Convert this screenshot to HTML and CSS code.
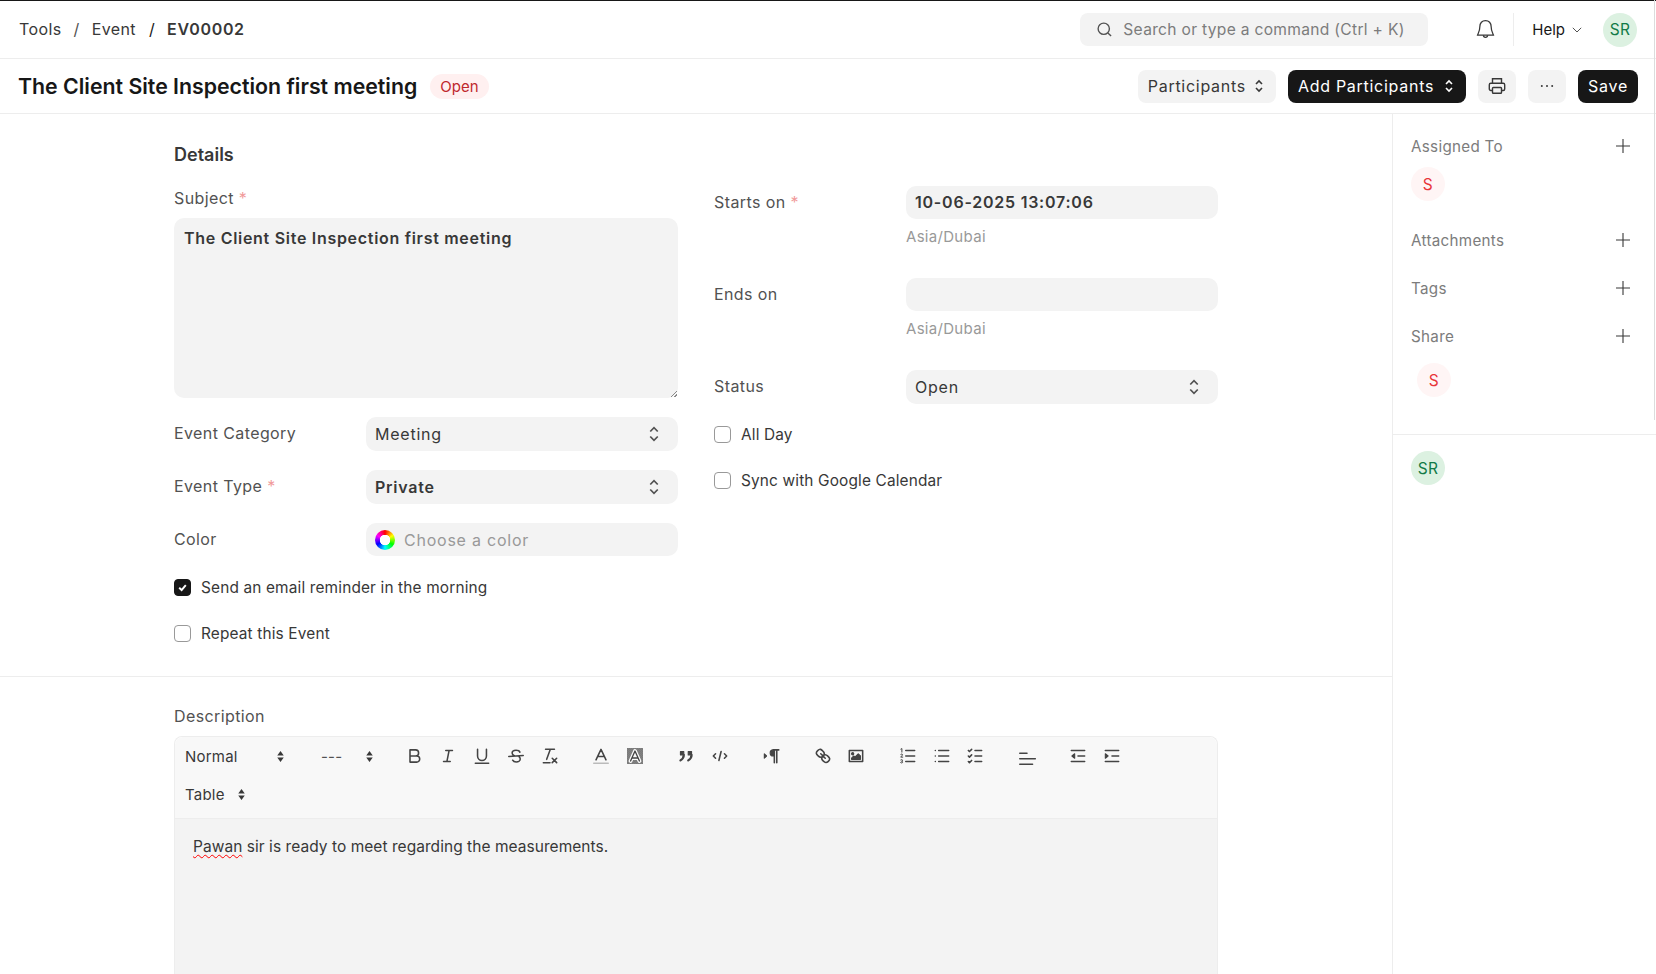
FILE: index.html
```html
<!DOCTYPE html>
<html lang="en">
<head>
    <meta charset="UTF-8">
    <meta name="viewport" content="width=device-width, initial-scale=1.0">
    <title>The Client Site Inspection first meeting</title>
    <link rel="stylesheet" href="styles.css">
</head>
<body>
    <header class="navbar">
        <nav class="crumbs">
            <a>Tools</a><span class="sep">/</span>
            <a>Event</a><span class="sep sep-dark">/</span>
            <a class="crumb-current">EV00002</a>
        </nav>
        <div class="search">
            <svg class="search-icon" viewBox="0 0 16 16"><circle cx="7.3" cy="7.3" r="5.3"/><path d="M11.2 11.2 14.2 14.2"/></svg>
            <span>Search or type a command (Ctrl + K)</span>
        </div>
        <svg class="bell" viewBox="0 0 20 20"><path d="M10 2.2c-3 0-4.9 2.2-4.9 5.2 0 4.400-1.700 6.400-2 7.400h13.800c-.3-1-2-3-2-7.400 0-3-1.900-5.200-4.900-5.200z"/><path d="M8.200 15c0 2.400 3.600 2.400 3.600 0"/></svg>
        <span class="nav-divider"></span>
        <span class="help">Help
            <svg viewBox="0 0 10 6"><path d="M.8.8 5 5 9.200.8"/></svg>
        </span>
        <span class="avatar avatar-green nav-avatar">SR</span>
    </header>

    <div class="page-head">
        <h1>The Client Site Inspection first meeting</h1>
        <span class="badge">Open</span>
        <div class="actions">
            <button class="btn">Participants <svg class="updown" viewBox="0 0 8 14"><path d="M1 5 4 2l3 3M1 9l3 3 3-3"/></svg></button>
            <button class="btn btn-dark btn-wide">Add Participants <svg class="updown" viewBox="0 0 8 14"><path d="M1 5 4 2l3 3M1 9l3 3 3-3"/></svg></button>
            <button class="btn btn-icon"><svg viewBox="0 0 20 20"><path d="M5.500 7V2.800h9V7M5.500 14.500H3.800a1.500 1.500 0 0 1-1.500-1.500V8.700a1.500 1.500 0 0 1 1.500-1.500h12.400a1.500 1.500 0 0 1 1.500 1.500V13a1.500 1.500 0 0 1-1.500 1.500h-1.700"/><rect x="5.500" y="11.500" width="9" height="5.700" rx=".8"/></svg></button>
            <button class="btn btn-icon"><svg viewBox="0 0 20 20"><circle class="dot" cx="4.800" cy="10" r="1"/><circle class="dot" cx="10" cy="10" r="1"/><circle class="dot" cx="15.200" cy="10" r="1"/></svg></button>
            <button class="btn btn-dark btn-save">Save</button>
        </div>
    </div>

    <div class="layout">
        <main class="main">
            <section class="details">
                <h2>Details</h2>
                <div class="columns">
                    <div class="col col-left">
                        <label class="stack-label">Subject <i class="req">*</i></label>
                        <div class="textarea">The Client Site Inspection first meeting<span class="grip"></span></div>

                        <div class="row row-first">
                            <label>Event Category</label>
                            <div class="input select">Meeting <svg class="updown" viewBox="0 0 8 14"><path d="M1 5 4 2l3 3M1 9l3 3 3-3"/></svg></div>
                        </div>
                        <div class="row">
                            <label>Event Type <i class="req">*</i></label>
                            <div class="input select strong">Private <svg class="updown" viewBox="0 0 8 14"><path d="M1 5 4 2l3 3M1 9l3 3 3-3"/></svg></div>
                        </div>
                        <div class="row">
                            <label>Color</label>
                            <div class="input color-input"><span class="wheel"></span>Choose a color</div>
                        </div>

                        <div class="check check-first"><span class="box box-on"><svg viewBox="0 0 10 10"><path d="M2 5.300 4.200 7.300 8 2.900"/></svg></span>Send an email reminder in the morning</div>
                        <div class="check"><span class="box"></span>Repeat this Event</div>
                    </div>

                    <div class="col col-right">
                        <div class="row row-tz">
                            <label>Starts on <i class="req">*</i></label>
                            <div>
                                <div class="input strong">10-06-2025 13:07:06</div>
                                <p class="hint">Asia/Dubai</p>
                            </div>
                        </div>
                        <div class="row row-tz">
                            <label>Ends on</label>
                            <div>
                                <div class="input"></div>
                                <p class="hint">Asia/Dubai</p>
                            </div>
                        </div>
                        <div class="row">
                            <label>Status</label>
                            <div class="input select">Open <svg class="updown" viewBox="0 0 8 14"><path d="M1 5 4 2l3 3M1 9l3 3 3-3"/></svg></div>
                        </div>
                        <div class="check check-allday"><span class="box"></span>All Day</div>
                        <div class="check"><span class="box"></span>Sync with Google Calendar</div>
                    </div>
                </div>
            </section>

            <section class="description">
                <label class="stack-label">Description</label>
                <div class="editor">
                    <div class="toolbar">
                        <div class="tool-row">
                            <span class="picker picker-normal">Normal <svg class="caret" viewBox="0 0 8 12"><path d="M4 1 7 5H1zM4 11 1 7h6z"/></svg></span>
                            <span class="picker picker-size">--- <svg class="caret" viewBox="0 0 8 12"><path d="M4 1 7 5H1zM4 11 1 7h6z"/></svg></span>
                            <div class="group">
                                <span class="tool"><svg viewBox="0 0 18 18"><path d="M4.500 3.500h5a2.700 2.700 0 0 1 0 5.500h-5zM4.500 9h6a2.700 2.700 0 0 1 0 5.500h-6z"/></svg></span>
                                <span class="tool"><svg viewBox="0 0 18 18"><path d="M7 4h6M5 14h6M8 14l2-10"/></svg></span>
                                <span class="tool"><svg viewBox="0 0 18 18"><path d="M5 3v6a4 4 0 0 0 8 0V3M3 15.500h12"/></svg></span>
                                <span class="tool"><svg viewBox="0 0 18 18"><path d="M2.500 9.500l13-1M12.500 5.500C12 4.200 10.800 3.800 9 3.800c-2 0-3.500 1-3.500 2.600 0 1.100.7 1.900 2 2.300M6 12.800C6.600 14 7.800 14.400 9.200 14.400c2.100 0 3.600-1 3.600-2.700 0-.8-.3-1.400-.9-1.900"/></svg></span>
                                <span class="tool"><svg viewBox="0 0 18 18"><path d="M5 3h8M6 12l3.300-9M11 11l4 4M15 11l-4 4M3 15h6"/></svg></span>
                            </div>
                            <div class="group">
                                <span class="tool"><svg viewBox="0 0 18 18"><path class="faint" d="M2.500 15.500h13"/><path d="M4.500 12.500 9 3l4.500 9.500M6.200 9.500h5.600"/></svg></span>
                                <span class="tool"><svg viewBox="0 0 18 18"><defs><pattern id="dither" width="1.8" height="1.8" patternUnits="userSpaceOnUse"><rect width=".9" height=".9" fill="#444"/><rect x=".9" y=".9" width=".9" height=".9" fill="#444"/></pattern></defs><rect class="dither" x="1.800" y="1.800" width="14.400" height="14.400" fill="url(#dither)"/><path class="halo" d="M5 13.500 9 4.500l4 9M6.400 10.800h5.200"/><path class="a-mark" d="M5 13.500 9 4.500l4 9M6.400 10.800h5.200"/></svg></span>
                            </div>
                            <div class="group">
                                <span class="tool"><svg viewBox="0 0 18 18"><rect class="solid" x="4" y="5" width="3" height="3"/><rect class="solid" x="11" y="5" width="3" height="3"/><path class="bold" d="M7 8c0 3-3 5-3 5M14 8c0 3-3 5-3 5"/></svg></span>
                                <span class="tool"><svg viewBox="0 0 18 18"><path d="M5 7 3 9l2 2M13 7l2 2-2 2M10 5l-2 8"/></svg></span>
                            </div>
                            <div class="group">
                                <span class="tool"><svg viewBox="0 0 18 18"><path class="solid" d="M3 11l2-2-2-2z"/><path class="solid" d="M11 3.500a2.700 2.700 0 0 0 0 5.500h.7V3.500z"/><path d="M11 3.500h5M12 4v11M14.200 4v11"/></svg></span>
                            </div>
                            <div class="group">
                                <span class="tool"><svg viewBox="0 0 18 18"><path d="M7 7l4 4M8.900 4.600a3.500 3.500 0 0 1 .4 4.700 3.500 3.500 0 0 1-4.700-.4C3.200 7.500 2 6.400 4.200 4.200S7.500 3.200 8.900 4.600zM13.400 9.100a3.500 3.500 0 0 0-4.700-.4 3.500 3.500 0 0 0 .4 4.700c1.400 1.400 2.500 2.500 4.700.4s1-3.300-.4-4.700z"/></svg></span>
                                <span class="tool"><svg viewBox="0 0 18 18"><rect x="3" y="4" width="12" height="10"/><circle class="solid" cx="6" cy="7" r="1"/><path class="solid" d="M5 12v-1l2-2 1 1 3-3 2 2v3z"/></svg></span>
                            </div>
                            <div class="group">
                                <span class="tool"><svg viewBox="0 0 18 18"><path d="M7 4h8M7 9h8M7 14h8"/><path class="thin" d="M2.600 2.800l.9-.5v3.200M2.400 7.700c.4-.8 1.800-.6 1.700.3 0 .8-1.500 1.200-1.700 2h1.900M2.500 12.500c.6-.5 1.700-.3 1.600.5 0 .5-.6.700-.9.700.5 0 1 .2 1 .8 0 .8-1.200 1-1.800.5"/></svg></span>
                                <span class="tool"><svg viewBox="0 0 18 18"><path d="M6 4h9M6 9h9M6 14h9"/><path d="M3 4h.01M3 9h.01M3 14h.01"/></svg></span>
                                <span class="tool"><svg viewBox="0 0 18 18"><path d="M9 4h6M9 9h6M9 14h6M3 4l1 1 2-2M3 9l1 1 2-2M3 14l1 1 2-2"/></svg></span>
                            </div>
                            <div class="group">
                                <span class="tool"><svg viewBox="0 0 18 18"><path d="M2.500 6.500h6.500M2.500 11.500h14M2.500 16.500h11.500"/></svg></span>
                            </div>
                            <div class="group">
                                <span class="tool"><svg viewBox="0 0 18 18"><path d="M3 4h12M9 9h6M3 14h12"/><path class="solid" d="M6 11 3.500 9 6 7z"/></svg></span>
                                <span class="tool"><svg viewBox="0 0 18 18"><path d="M3 4h12M9 9h6M3 14h12"/><path class="solid" d="M3 7l2.500 2L3 11z"/></svg></span>
                            </div>
                        </div>
                        <div class="tool-row">
                            <span class="picker picker-table">Table <svg class="caret" viewBox="0 0 8 12"><path d="M4 1 7 5H1zM4 11 1 7h6z"/></svg></span>
                        </div>
                    </div>
                    <div class="editor-body"><span class="misspelt">Pawan</span> sir is ready to meet regarding the measurements.</div>
                </div>
            </section>
        </main>

        <aside class="sidebar">
            <div class="side-top">
                <div class="side-head side-assigned"><span>Assigned To</span><svg class="plus" viewBox="0 0 16 16"><path d="M8 1v14M1 8h14"/></svg></div>
                <span class="avatar avatar-red">S</span>
                <div class="side-head side-attach"><span>Attachments</span><svg class="plus" viewBox="0 0 16 16"><path d="M8 1v14M1 8h14"/></svg></div>
                <div class="side-head"><span>Tags</span><svg class="plus" viewBox="0 0 16 16"><path d="M8 1v14M1 8h14"/></svg></div>
                <div class="side-head"><span>Share</span><svg class="plus" viewBox="0 0 16 16"><path d="M8 1v14M1 8h14"/></svg></div>
                <span class="avatar avatar-red avatar-shared">S</span>
            </div>
            <div class="side-bottom">
                <span class="avatar avatar-green">SR</span>
            </div>
        </aside>
    </div>
    <div class="scroll-edge"></div>
</body>
</html>
```

FILE: styles.css
```css
* {
    box-sizing: border-box;
}

html, body {
    height: 100%;
    overflow: hidden;
}

body {
    margin: 0;
    background: #fff;
    color: #383838;
    font-family: Inter, "Noto Sans", sans-serif;
    font-size: 15px;
    letter-spacing: 0.02em;
    position: relative;
}

/* top bar */
.navbar {
    height: 59px;
    display: flex;
    align-items: center;
    padding: 0 19px;
    border-top: 1px solid #171717;
    border-bottom: 1px solid #ededed;
}

.crumbs {
    font-size: 16px;
    color: #383838;
    letter-spacing: 0.025em;
    flex: 1;
    padding-bottom: 2px;
}

.sep {
    margin: 0 7px 0 12px;
    color: #525252;
}

.sep-dark {
    margin: 0 7px 0 13px;
    color: #171717;
}

.crumb-current {
    font-weight: 600;
    letter-spacing: 0.04em;
}

.search {
    width: 348px;
    height: 33px;
    background: #f3f3f3;
    border-radius: 8px;
    display: flex;
    align-items: center;
    padding-left: 16px;
    color: #7c7c7c;
    font-size: 15.6px;
}

.search-icon {
    width: 17px;
    height: 17px;
    margin-right: 10px;
    fill: none;
    stroke: #525252;
    stroke-width: 1.3;
}

.bell {
    width: 23px;
    height: 23px;
    margin-left: 46px;
    fill: none;
    stroke: #383838;
    stroke-width: 1.1;
}

.nav-divider {
    width: 1px;
    height: 33px;
    background: #ededed;
    margin: 0 18px 0 16px;
}

.help {
    display: flex;
    align-items: center;
    color: #171717;
    font-size: 15px;
    letter-spacing: 0;
}

.help svg {
    width: 10px;
    height: 6px;
    margin-left: 7px;
    fill: none;
    stroke: #525252;
}

.nav-avatar {
    margin-left: 21px;
    font-size: 17px;
}

/* title row */
.page-head {
    height: 55px;
    display: flex;
    align-items: center;
    padding: 0 18px;
    border-bottom: 1px solid #ededed;
}

h1 {
    margin: 0;
    font-size: 21.3px;
    font-weight: 600;
    color: #171717;
    letter-spacing: 0;
}

.badge {
    margin-left: 13px;
    padding: 0 10px;
    height: 25px;
    line-height: 25px;
    border-radius: 13px;
    background: #fff0f0;
    color: #c0282d;
    font-size: 15px;
    letter-spacing: 0;
}

.actions {
    margin-left: auto;
    display: flex;
    gap: 12px;
}

.btn {
    height: 33px;
    padding: 0 13px 0 10px;
    border: 0;
    border-radius: 8px;
    background: #f3f3f3;
    color: #383838;
    font: inherit;
    font-size: 16px;
    letter-spacing: 0.045em;
    display: flex;
    align-items: center;
    gap: 9px;
}

.btn-dark {
    background: #171717;
    color: #fff;
}

.btn-wide {
    gap: 11px;
}

.btn-icon {
    width: 38px;
    padding: 0;
    justify-content: center;
}

.btn-icon svg {
    width: 20px;
    height: 20px;
    fill: none;
    stroke: #383838;
    stroke-width: 1.4;
}

.btn-icon .dot {
    fill: #383838;
    stroke: none;
}

.btn-save {
    padding: 0 10px;
}

.updown {
    width: 8px;
    height: 14px;
    fill: none;
    stroke: currentColor;
    stroke-width: 1.6;
}

/* page body */
.layout {
    display: flex;
    height: calc(100vh - 114px);
}

.main {
    flex: 1;
    min-width: 0;
    border-right: 1px solid #ededed;
}

.details {
    padding: 30px 0 0 174px;
    height: 563px;
    border-bottom: 1px solid #ededed;
}

h2 {
    margin: 0 0 17px;
    font-size: 18px;
    line-height: 22px;
    font-weight: 600;
    letter-spacing: 0;
}

.columns {
    display: flex;
    gap: 36px;
}

.col {
    width: 504px;
}

.col-left {
    padding-top: 5px;
}

.col-right {
    padding-top: 3px;
}

label {
    color: #525252;
    font-size: 16px;
    letter-spacing: 0.025em;
}

.stack-label {
    display: block;
    line-height: 20px;
    margin-bottom: 10px;
}

.req {
    color: #f19a9a;
    font-style: normal;
}

.textarea {
    height: 180px;
    background: #f3f3f3;
    border-radius: 10px;
    padding: 10px;
    font-size: 16px;
    font-weight: 600;
    line-height: 20px;
    letter-spacing: 0.044em;
    position: relative;
}

.grip {
    position: absolute;
    right: 1px;
    bottom: 1px;
    width: 6px;
    height: 6px;
    background: linear-gradient(135deg, transparent 45%, #8a8a8a 45%, #8a8a8a 55%, transparent 55%, transparent 70%, #8a8a8a 70%, #8a8a8a 85%, transparent 85%);
}

.row {
    display: grid;
    grid-template-columns: 192px 312px;
    margin-bottom: 19px;
}

.row label {
    line-height: 32px;
}

.row-first {
    margin-top: 19px;
}

.col-right .row-tz {
    margin-bottom: 26px;
}

.input {
    height: 33px;
    background: #f3f3f3;
    border-radius: 10px;
    padding: 0 9px;
    font-size: 16px;
    line-height: 33px;
    letter-spacing: 0.048em;
    display: flex;
    align-items: center;
}

.strong {
    font-weight: 600;
}

.select {
    height: 34px;
    justify-content: space-between;
    padding-right: 19px;
}

.select .updown {
    width: 10px;
    height: 18px;
    stroke: #525252;
    stroke-width: 1.4;
}

.hint {
    margin: 8px 0 0;
    height: 25px;
    line-height: 20px;
    font-size: 15px;
    color: #999;
    letter-spacing: 0.02em;
}

.color-input {
    color: #999;
    padding-top: 1px;
}

.wheel {
    width: 20px;
    height: 20px;
    margin-right: 9px;
    border-radius: 50%;
    background: radial-gradient(circle, #fff 0 5px, transparent 5.500px), conic-gradient(#f00, #ff0, #0f0, #0ff, #00f, #f0f, #f00);
}

.check {
    display: flex;
    align-items: center;
    height: 20px;
    margin-top: 26px;
    color: #383838;
    font-size: 15.4px;
    letter-spacing: 0.01em;
}

.check-first {
    margin-top: 21px;
}

.check-allday {
    margin-top: 20px;
}

.box {
    width: 17px;
    height: 17px;
    margin-right: 10px;
    border: 1px solid #999;
    border-radius: 4px;
    background: #fff;
    flex: none;
}

.box-on {
    background: #171717;
    border-color: #171717;
    display: flex;
    align-items: center;
    justify-content: center;
}

.box-on svg {
    width: 11px;
    height: 11px;
    fill: none;
    stroke: #fff;
    stroke-width: 1.8;
}

/* description */
.description {
    padding: 29px 0 0 174px;
    width: 1218px;
}

.description .stack-label {
    margin-bottom: 11px;
}

.editor {
    border: 1px solid #ededed;
    border-bottom: 0;
    border-radius: 8px 8px 0 0;
    height: 238px;
    margin-top: -1px;
    overflow: hidden;
}

.toolbar {
    background: #f8f8f8;
    border-bottom: 1px solid #ededed;
    border-radius: 8px 8px 0 0;
    padding: 0 0 3px 5px;
    height: 82px;
}

.tool-row {
    height: 38px;
    display: flex;
    align-items: center;
}

.picker {
    display: flex;
    justify-content: space-between;
    align-items: center;
    padding: 0 6px 0 5px;
    font-size: 15px;
    letter-spacing: 0.015em;
    color: #383838;
}

.picker-normal {
    width: 111px;
    margin-right: 25px;
}

.picker-size {
    width: 64px;
    color: #525252;
}

.picker-table {
    width: 72px;
}

.caret {
    width: 9px;
    height: 13px;
    fill: #383838;
}

.group {
    display: flex;
    margin-left: 17.66px;
}

.tool {
    width: 33.75px;
    height: 34px;
    display: flex;
    align-items: center;
    justify-content: center;
}

.tool svg {
    width: 20px;
    height: 20px;
    fill: none;
    stroke: #444;
    stroke-width: 1.4;
    stroke-linecap: round;
    stroke-linejoin: round;
}

.tool .solid {
    fill: #444;
    stroke-width: 1;
}

.tool .bold {
    stroke-width: 2;
}

.tool .thin {
    stroke-width: .9;
}

.tool .faint {
    stroke: #bbb;
}

.tool .dither {
    stroke: none;
    opacity: .7;
}

.tool .halo {
    stroke: #f8f8f8;
    stroke-width: 3.5;
}

.tool .a-mark {
    stroke-width: 1.2;
}

.editor-body {
    height: 155px;
    background: #f3f3f3;
    padding: 18px;
    font-size: 15.500px;
    line-height: 20px;
    letter-spacing: 0.003em;
}

.misspelt {
    text-decoration: underline wavy #f00 1px;
    text-underline-offset: 2px;
}

/* right sidebar */
.sidebar {
    width: 263px;
    flex: none;
    color: #7c7c7c;
    font-size: 15.2px;
}

.side-top {
    height: 321px;
    padding: 22px 0 0 18px;
    border-bottom: 1px solid #ededed;
}

.side-head {
    display: flex;
    justify-content: space-between;
    align-items: center;
    height: 20px;
    margin-bottom: 28px;
    padding-right: 25px;
}

.side-assigned {
    margin-bottom: 11px;
}

.side-attach {
    margin-top: 29px;
}

.plus {
    width: 16px;
    height: 16px;
    fill: none;
    stroke: #383838;
    stroke-width: 1.1;
}

.avatar {
    display: flex;
    align-items: center;
    justify-content: center;
    width: 34px;
    height: 34px;
    border-radius: 50%;
    font-size: 15.5px;
    letter-spacing: 0.02em;
    flex: none;
}

.avatar-red {
    background: #fff5f5;
    color: #e8343a;
}

.avatar-green {
    background: #dcf1e1;
    color: #137a48;
}

.avatar-shared {
    margin: -11px 0 0 6px;
}

.side-bottom {
    padding: 16px 18px;
}

/* thin scroll edge at the right of the window */
.scroll-edge {
    position: absolute;
    top: 0;
    right: 1px;
    width: 1px;
    height: 420px;
    background: #dcdcdc;
}
```
